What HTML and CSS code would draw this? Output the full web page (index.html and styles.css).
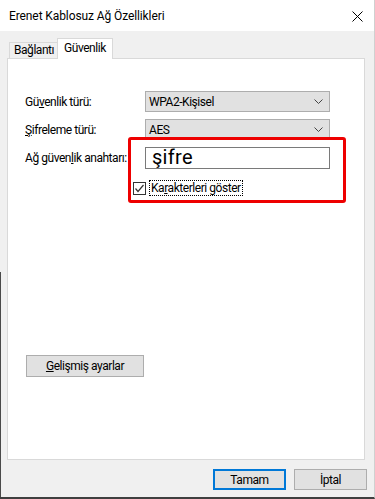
FILE: index.html
```html
<!DOCTYPE html>
<html lang="tr">
<head>
  <meta charset="UTF-8">
  <meta name="viewport" content="width=device-width, initial-scale=1.0">
  <title>Erenet Kablosuz Ağ Özellikleri</title>
  <link rel="stylesheet" href="styles.css">
</head>
<body>
<div class="window">
  <div class="titlebar">
    <span class="title">Erenet Kablosuz Ağ Özellikleri</span>
    <svg class="close" width="11" height="11" viewBox="0 0 11 11">
      <path d="M0.5 0.5 L10.5 10.5 M10.5 0.5 L0.5 10.5" stroke="#000" stroke-width="1" fill="none"></path>
    </svg>
  </div>

  <div class="tabs">
    <div class="tab">Bağlantı</div>
    <div class="tab active">Güvenlik</div>
  </div>

  <div class="panel">
    <div class="form">
      <label class="field-label">Gü<u>v</u>enlik türü:</label>
      <div class="combo">
        <span>WPA2-Kişisel</span>
        <svg width="9" height="5" viewBox="0 0 9 5"><polyline points="0.5 0.5 4.5 4.5 8.5 0.5" fill="none" stroke="#444" stroke-width="1"></polyline></svg>
      </div>

      <label class="field-label"><u>Ş</u>ifreleme türü:</label>
      <div class="combo">
        <span>AES</span>
        <svg width="9" height="5" viewBox="0 0 9 5"><polyline points="0.5 0.5 4.5 4.5 8.5 0.5" fill="none" stroke="#444" stroke-width="1"></polyline></svg>
      </div>

      <label class="field-label">Ağ güven<u>l</u>ik anahtarı:</label>
      <div class="textbox">şifre</div>
    </div>

    <div class="check-row">
      <span class="checkbox">
        <svg width="11" height="11" viewBox="0 0 11 11"><polyline points="1.5 5.5 4 8.5 9.5 2" fill="none" stroke="#333" stroke-width="1.2"></polyline></svg>
      </span>
      <span class="check-label">Ka<u>r</u>akterleri göster</span>
    </div>

    <button class="btn advanced"><u>G</u>elişmiş ayarlar</button>

    <div class="highlight"></div>
  </div>

  <div class="footer">
    <button class="btn default">Tamam</button>
    <button class="btn">İptal</button>
  </div>
</div>
</body>
</html>
```

FILE: styles.css
```css
:root {
  --bg: #f0f0f0;
  --tab-border: #d9d9d9;
  --btn-bg: #e1e1e1;
  --btn-border: #adadad;
  --accent: #0078d7;
}

body {
  margin: 0;
  font-family: Roboto, "Liberation Sans", sans-serif;
  font-size: 12px;
  letter-spacing: -0.45px;
  color: #000;
}

.window {
  width: 375px;
  height: 499px;
  box-sizing: border-box;
  background:
    linear-gradient(to bottom, transparent 272px, #4a4a4a 272px) left top / 1px 100% no-repeat,
    var(--bg);
  border-right: 1px solid #d0d0d0;
  border-bottom: 2px solid #3f3f3f;
  display: flex;
  flex-direction: column;
}

.titlebar {
  height: 31px;
  background: #fff;
  display: flex;
  align-items: center;
  justify-content: space-between;
  padding: 0 11px 0 9px;
  flex-shrink: 0;
}

.title {
  font-size: 12px;
  letter-spacing: -0.1px;
  padding-top: 1px;
}

.close {
  display: block;
  margin-top: 1px;
}

.tabs {
  display: flex;
  align-items: flex-end;
  padding: 7px 0 0 9px;
}

.tab {
  box-sizing: border-box;
  height: 17px;
  width: 48px;
  padding-left: 4px;
  line-height: 15px;
  border: 1px solid var(--tab-border);
  border-right: none;
  border-bottom: none;
  background: var(--bg);
}

.tab.active {
  position: relative;
  z-index: 1;
  height: 21px;
  width: 56px;
  padding-left: 6px;
  line-height: 18px;
  border-right: 1px solid var(--tab-border);
  background: #fff;
}

.panel {
  position: relative;
  box-sizing: border-box;
  margin: -1px 9px 0 7px;
  height: 402px;
  border: 1px solid var(--tab-border);
  background: #fff;
  padding: 32px 0 0 17px;
}

.form {
  display: grid;
  grid-template-columns: 120px 185px;
  grid-template-rows: 21px 21px 22px;
  row-gap: 7px;
  align-items: center;
}

.form > :nth-child(5),
.form > :nth-child(6) {
  margin-top: -1px;
}

.combo {
  box-sizing: border-box;
  height: 21px;
  background: var(--btn-bg);
  border: 1px solid var(--btn-border);
  display: flex;
  align-items: center;
  justify-content: space-between;
  padding: 0 6px 0 3px;
}

.combo svg {
  display: block;
}

.textbox {
  box-sizing: border-box;
  height: 22px;
  border: 1px solid #7a7a7a;
  background: #fff;
  padding-left: 6px;
  font-size: 20px;
  letter-spacing: 0.3px;
  line-height: 18px;
}

u {
  text-decoration-thickness: 1px;
  text-underline-offset: 1px;
}

.check-row {
  display: flex;
  align-items: center;
  gap: 3px;
  margin: 11px 0 0 108px;
}

.checkbox {
  box-sizing: border-box;
  width: 13px;
  height: 13px;
  border: 1px solid #333;
  background: #fff;
  display: flex;
  align-items: center;
  justify-content: center;
}

.checkbox svg {
  display: block;
}

.check-label {
  box-sizing: border-box;
  height: 16px;
  line-height: 14px;
  padding: 0 1px;
  border: 1px dotted #000;
}

.btn {
  box-sizing: border-box;
  font-family: inherit;
  font-size: 12px;
  letter-spacing: inherit;
  color: #000;
  background: var(--btn-bg);
  border: 1px solid var(--btn-border);
  border-radius: 0;
  padding: 0;
}

.advanced {
  display: block;
  width: 118px;
  height: 22px;
  margin: 159px 0 0 1px;
}

.highlight {
  position: absolute;
  left: 120px;
  top: 78px;
  width: 218px;
  height: 66px;
  box-sizing: border-box;
  border: 3px solid #ee0000;
  border-radius: 3px;
}

.footer {
  display: flex;
  justify-content: flex-end;
  gap: 8px;
  padding: 9px 7px 0 0;
}

.footer .btn {
  width: 73px;
  height: 21px;
}

.footer .default {
  border: 2px solid var(--accent);
}
```
